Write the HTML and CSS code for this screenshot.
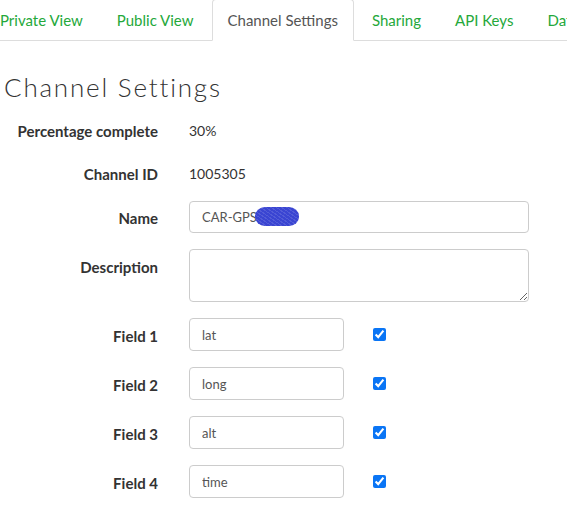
FILE: index.html
```html
<!DOCTYPE html>
<html>
<head>
<meta charset="utf-8">
<link rel="stylesheet" href="styles.css">
</head>
<body>
<ul class="tabs">
  <li class="tab"><a>Private View</a></li>
  <li class="tab"><a>Public View</a></li>
  <li class="tab active"><a>Channel Settings</a></li>
  <li class="tab"><a>Sharing</a></li>
  <li class="tab"><a>API Keys</a></li>
  <li class="tab"><a>Data Import / Export</a></li>
</ul>
<h1 class="title">Channel Settings</h1>
<div class="form">
  <div class="row static">
    <div class="label">Percentage complete</div>
    <div class="value">30%</div>
  </div>
  <div class="row static">
    <div class="label">Channel ID</div>
    <div class="value">1005305</div>
  </div>
  <div class="row">
    <div class="label">Name</div>
    <div class="wide-wrap">
      <input class="input wide" type="text" value="CAR-GPS">
      <span class="scribble"></span>
    </div>
  </div>
  <div class="row">
    <div class="label">Description</div>
    <textarea class="input area"></textarea>
  </div>
  <div class="row">
    <div class="label">Field 1</div>
    <input class="input short" type="text" value="lat">
    <input class="check" type="checkbox" checked>
  </div>
  <div class="row">
    <div class="label">Field 2</div>
    <input class="input short" type="text" value="long">
    <input class="check" type="checkbox" checked>
  </div>
  <div class="row">
    <div class="label">Field 3</div>
    <input class="input short" type="text" value="alt">
    <input class="check" type="checkbox" checked>
  </div>
  <div class="row">
    <div class="label">Field 4</div>
    <input class="input short" type="text" value="time">
    <input class="check" type="checkbox" checked>
  </div>
</div>
</body>
</html>
```
FILE: styles.css
```css
html, body {
  margin: 0;
  padding: 0;
  background: #fff;
  overflow: hidden;
}
body {
  font-family: "Lato", "Liberation Sans", sans-serif;
  color: #333;
  font-size: 14px;
  width: 567px;
  height: 511px;
}
.tabs {
  list-style: none;
  margin: -1px 0 0 -16px;
  padding: 0;
  display: flex;
  white-space: nowrap;
  border-bottom: 1px solid #ddd;
  width: 800px;
}
.tab {
  margin-right: 2px;
  margin-bottom: -1px;
}
.tab a {
  display: block;
  padding: 10px 15px;
  line-height: 20px;
  font-size: 15px;
  color: #24a83a;
  border: 1px solid transparent;
  border-radius: 4px 4px 0 0;
}
.tab.active a {
  color: #555;
  background: #fff;
  border-color: #ddd #ddd transparent #ddd;
}
.title {
  margin: 0;
  padding: 28px 0 0 4px;
  height: 45px;
  font-family: "Lato", sans-serif;
  font-weight: 300;
  font-size: 26px;
  line-height: 36px;
  color: #333;
  letter-spacing: 1.8px;
}
.form {
  display: flex;
  flex-direction: column;
  gap: 16px;
}
.row {
  display: flex;
  align-items: flex-start;
}
.row.static {
  height: 34px;
  margin-bottom: -7px;
}
.label {
  width: 158px;
  text-align: right;
  font-weight: 700;
  font-size: 15px;
  line-height: 20px;
  padding-top: 8px;
  margin-right: 31px;
  color: #333;
}
.row.static .label {
  padding-top: 7px;
}
.value {
  padding-top: 7px;
  line-height: 20px;
  font-size: 14px;
  color: #333;
}
.input {
  box-sizing: border-box;
  border: 1px solid #ccc;
  border-radius: 4px;
  font-family: "Lato", "Liberation Sans", sans-serif;
  font-size: 13px;
  color: #555;
  padding: 6px 12px;
  margin: 0;
  background: #fff;
  outline: none;
}
.wide-wrap {
  position: relative;
  margin-top: 1px;
}
.wide {
  width: 340px;
  height: 32px;
  display: block;
}
.scribble {
  position: absolute;
  left: 66px;
  top: 6px;
  width: 44px;
  height: 19px;
  border-radius: 10px / 9px;
  background:
    repeating-linear-gradient(35deg, rgba(255,255,255,0.12) 0 1px, transparent 1px 3px),
    #3a45d2;
}
.area {
  width: 340px;
  height: 53px;
  resize: vertical;
  display: block;
}
.short {
  width: 155px;
  height: 33px;
  display: block;
}
.check {
  margin: 10px 0 0 29px;
  width: 13px;
  height: 13px;
  accent-color: #0a75f5;
}
```
